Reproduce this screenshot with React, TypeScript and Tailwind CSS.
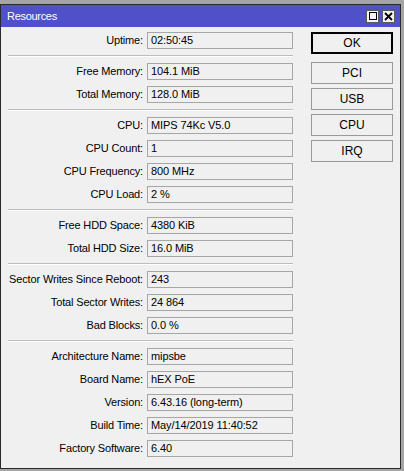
import React from "react";

type Row = { label: string; value: string };

const groups: Row[][] = [
  [{ label: "Uptime:", value: "02:50:45" }],
  [
    { label: "Free Memory:", value: "104.1 MiB" },
    { label: "Total Memory:", value: "128.0 MiB" },
  ],
  [
    { label: "CPU:", value: "MIPS 74Kc V5.0" },
    { label: "CPU Count:", value: "1" },
    { label: "CPU Frequency:", value: "800 MHz" },
    { label: "CPU Load:", value: "2 %" },
  ],
  [
    { label: "Free HDD Space:", value: "4380 KiB" },
    { label: "Total HDD Size:", value: "16.0 MiB" },
  ],
  [
    { label: "Sector Writes Since Reboot:", value: "243" },
    { label: "Total Sector Writes:", value: "24 864" },
    { label: "Bad Blocks:", value: "0.0 %" },
  ],
  [
    { label: "Architecture Name:", value: "mipsbe" },
    { label: "Board Name:", value: "hEX PoE" },
    { label: "Version:", value: "6.43.16 (long-term)" },
    { label: "Build Time:", value: "May/14/2019 11:40:52" },
    { label: "Factory Software:", value: "6.40" },
  ],
];

const buttons = ["PCI", "USB", "CPU", "IRQ"];

function Field({ label, value }: Row) {
  return (
    <div className="flex h-[17px] items-center">
      <div className="w-[146px] pr-[4px] text-right leading-none tracking-[-0.15px] whitespace-nowrap">{label}</div>
      <div className="flex h-[17px] w-[146px] items-center border border-[#a6a6a6] bg-[#f0f0f0] pl-[3px] leading-none tracking-[-0.1px] whitespace-nowrap">
        {value}
      </div>
    </div>
  );
}

export default function App() {
  return (
    <div className="h-[471px] w-[404px] overflow-hidden bg-[#a5a5a5] font-['Liberation_Sans',Arial,sans-serif] text-[11px] text-black">
      <div className="mt-[4px] flex h-[465px] w-[401px] flex-col border border-[#2b2b2b] bg-[#f0f0f0]">
        {/* title bar */}
        <div className="flex h-[22px] shrink-0 items-center justify-between bg-[#5050c8] pl-[6px] pr-[5px]">
          <span className="text-[11px] tracking-[-0.3px] text-white">Resources</span>
          <div className="flex gap-[3px]">
            <div className="flex size-[13px] items-center justify-center border border-[#5a5a5a] bg-[#f4f4f4]">
              <div className="size-[8px] border-[1.5px] border-black" />
            </div>
            <div className="flex size-[13px] items-center justify-center border border-[#5a5a5a] bg-[#f4f4f4]">
              <svg width="9" height="9" viewBox="0 0 9 9">
                <path d="M1 1 L8 8 M8 1 L1 8" stroke="black" strokeWidth="1.8" />
              </svg>
            </div>
          </div>
        </div>

        <div className="flex pt-[5px]">
          {/* left form */}
          <div className="flex w-[293px] flex-col">
            {groups.map((g, gi) => (
              <React.Fragment key={gi}>
                {gi > 0 && (
                  <div className="ml-[7px] mt-[6px] mb-[6px] w-[285px] border-t border-b border-t-[#bdbdbd] border-b-white" />
                )}
                <div className="flex flex-col gap-[6px]">
                  {g.map((r) => (
                    <Field key={r.label} {...r} />
                  ))}
                </div>
              </React.Fragment>
            ))}
          </div>

          {/* right buttons */}
          <div className="ml-[17px] flex w-[82px] flex-col">
            <div className="flex h-[22px] items-center justify-center border-2 border-black bg-[#f0f0f0] text-[12px]">
              OK
            </div>
            <div className="mt-[8px] flex flex-col gap-[4px]">
              {buttons.map((b) => (
                <div
                  key={b}
                  className="flex h-[22px] items-center justify-center border border-[#9a9a9a] bg-[#f0f0f0] text-[12px]"
                >
                  {b}
                </div>
              ))}
            </div>
          </div>
        </div>
      </div>
    </div>
  );
}
